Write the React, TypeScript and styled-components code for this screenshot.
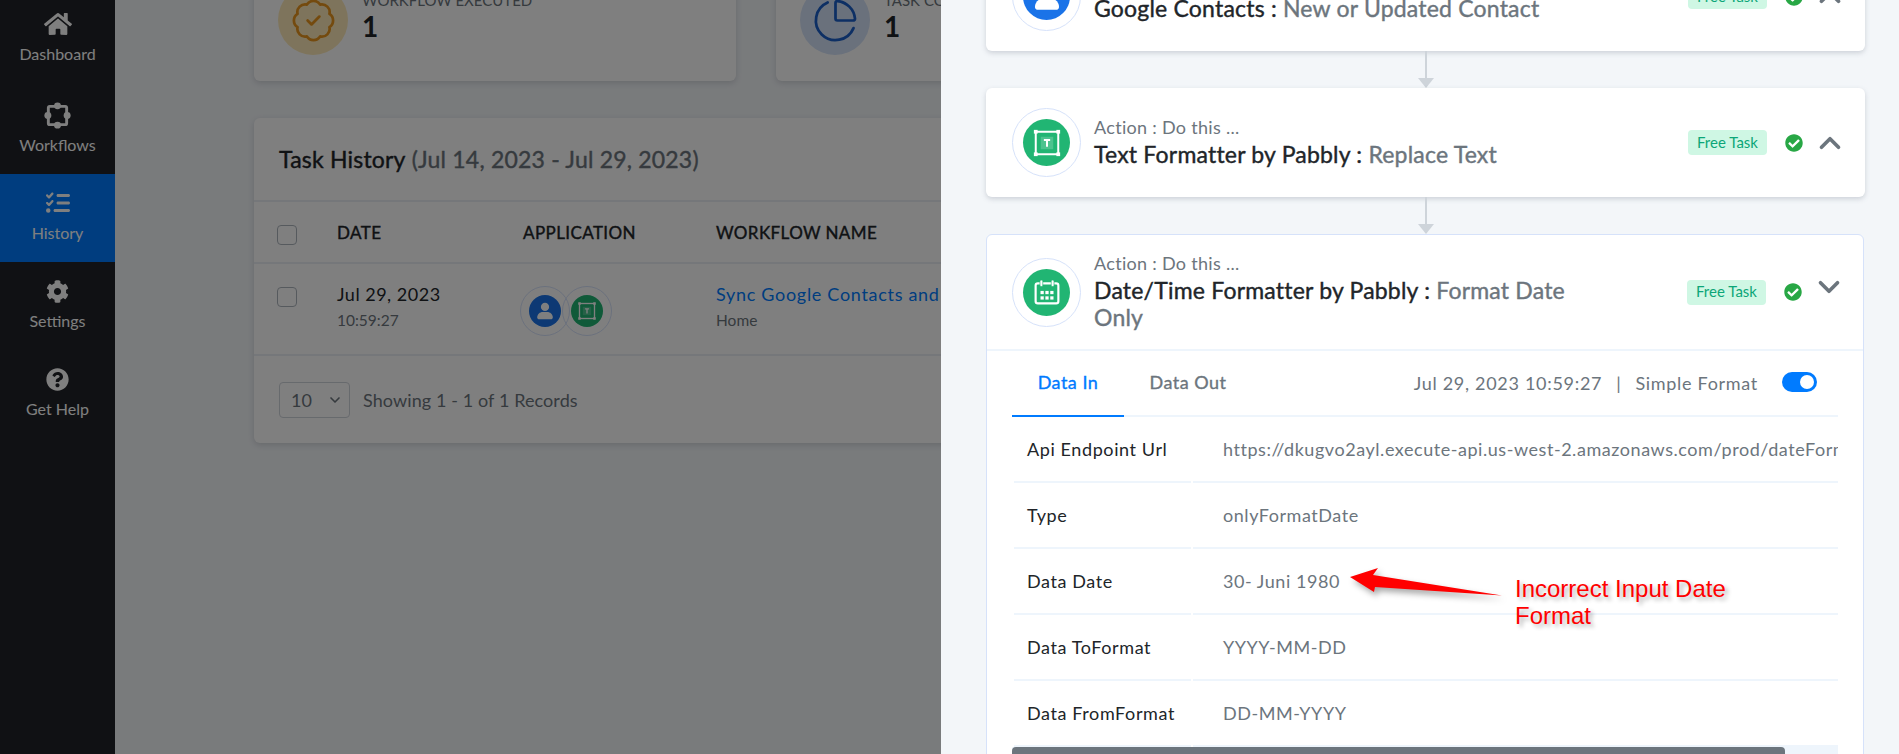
import React from 'react';
import styled, { createGlobalStyle } from 'styled-components';
import { FaHome, FaCog, FaQuestionCircle, FaCheckCircle } from 'react-icons/fa';
import { FaListCheck } from 'react-icons/fa6';
import { BadgeCheck, PieChart, ChevronDown, ChevronUp } from 'lucide-react';

const GlobalStyle = createGlobalStyle`
  html, body { margin: 0; padding: 0; height: 100%; background: #f3f6f9; }
  body { font-family: Lato, "Noto Sans", sans-serif; color: #212529; }
  * { box-sizing: border-box; }
`;

const Root = styled.div`
  position: relative;
  display: flex;
  width: 1899px;
  height: 754px;
  overflow: hidden;
`;

/* left app */
const Sidebar = styled.nav`
  width: 115px;
  flex: none;
  background: #212328;
  display: flex;
  flex-direction: column;
  margin-top: -2px;
`;

const NavItem = styled.div<{ $active?: boolean }>`
  height: 88px;
  display: flex;
  flex-direction: column;
  align-items: center;
  padding-top: 15px;
  gap: 6px;
  color: #fff;
  font-size: 16px;
  background: ${(p) => (p.$active ? '#007bff' : 'transparent')};
  &:first-child { padding-top: 12px; }
`;

const NavIcon = styled.span`
  height: 28px;
  display: flex;
  align-items: center;
  justify-content: center;
`;

const Main = styled.main`
  flex: 1;
  padding: 0 0 0 139px;
  margin-top: -38px;
  display: flex;
  flex-direction: column;
  gap: 37px;
`;

const Stats = styled.div`
  display: flex;
  gap: 40px;
`;

const StatCard = styled.div`
  width: 482px;
  height: 119px;
  flex: none;
  background: #fff;
  border-radius: 6px;
  box-shadow: 0 2px 6px rgba(60, 70, 90, 0.2);
  display: flex;
  align-items: center;
  gap: 14px;
  padding: 0 24px 3px;
`;

const StatIcon = styled.div<{ $bg: string; $fg: string }>`
  width: 70px;
  height: 70px;
  border-radius: 50%;
  background: ${(p) => p.$bg};
  color: ${(p) => p.$fg};
  display: flex;
  align-items: center;
  justify-content: center;
`;

const StatBody = styled.div`
  margin-bottom: 7px;
`;

const StatLabel = styled.div`
  font-size: 15px;
  line-height: 19px;
  color: #6c757d;
`;

const StatValue = styled.div`
  font-size: 28px;
  font-weight: 700;
  line-height: 32px;
`;

const HistoryCard = styled.section`
  width: 1100px;
  height: 325px;
  background: #fff;
  border-radius: 6px;
  box-shadow: 0 2px 6px rgba(60, 70, 90, 0.2);
`;

const HistoryTitle = styled.h2`
  margin: 0;
  height: 84px;
  padding: 0 25px;
  display: flex;
  align-items: center;
  gap: 6px;
  font-size: 23px;
  font-weight: 400;
  letter-spacing: 0.2px;
  -webkit-text-stroke: 0.4px currentColor;
  border-bottom: 2px solid #eaeff5;
  span { color: #6c757d; }
`;

const HistoryRow = styled.div<{ $head?: boolean }>`
  display: grid;
  grid-template-columns: 60px 186px 193px 1fr;
  height: ${(p) => (p.$head ? '62px' : '92px')};
  padding-left: 23px;
  border-bottom: 2px solid #eaeff5;
  align-items: ${(p) => (p.$head ? 'center' : 'start')};
  padding-top: ${(p) => (p.$head ? '0' : '18px')};
`;

const HeadCell = styled.div`
  font-size: 17px;
  letter-spacing: 0.4px;
  -webkit-text-stroke: 0.4px currentColor;
  color: #212529;
`;

const Checkbox = styled.span`
  display: block;
  width: 20px;
  height: 20px;
  margin-top: 5px;
  border: 1px solid #adb5bd;
  border-radius: 4px;
  background: #fff;
`;

const CellMain = styled.div<{ $link?: boolean }>`
  font-size: 18px;
  line-height: 24px;
  letter-spacing: ${(p) => (p.$link ? '0.7px' : '0.5px')};
  white-space: nowrap;
  color: ${(p) => (p.$link ? '#007bff' : '#212529')};
`;

const CellSub = styled.div`
  font-size: 15.5px;
  line-height: 24px;
  margin-top: 2px;
  color: #6c757d;
`;

const AppIcons = styled.div`
  display: flex;
  margin-left: -3px;
  margin-top: 4px;
`;

const RingSmall = styled.div`
  width: 50px;
  height: 50px;
  border: 1px solid #d6e2fa;
  border-radius: 50%;
  display: flex;
  align-items: center;
  justify-content: center;
  flex: none;
  & + & { margin-left: -8px; }
`;

const AppDot = styled.div<{ $bg: string; $size: number }>`
  width: ${(p) => p.$size}px;
  height: ${(p) => p.$size}px;
  border-radius: 50%;
  background: ${(p) => p.$bg};
  display: flex;
  align-items: center;
  justify-content: center;
  flex: none;
`;

const Pager = styled.div`
  display: flex;
  align-items: center;
  gap: 13px;
  padding: 26px 25px;
  font-size: 18px;
  letter-spacing: 0.1px;
  color: #6c757d;
`;

const PageSelect = styled.div`
  width: 71px;
  height: 36px;
  border: 1px solid #ced4da;
  border-radius: 4px;
  display: flex;
  align-items: center;
  justify-content: space-between;
  padding: 0 6px 0 11px;
`;

const Overlay = styled.div`
  position: absolute;
  inset: 0;
  background: rgba(0, 0, 0, 0.5);
`;

/* right drawer */
const Drawer = styled.aside`
  position: absolute;
  top: 0;
  right: 0;
  bottom: 0;
  width: 958px;
  background: #f3f6f9;
  overflow: hidden;
  padding: 0 34px 0 45px;
`;

const Flow = styled.div`
  margin-top: -58px;
  display: flex;
  flex-direction: column;
`;

const StepCard = styled.div<{ $open?: boolean }>`
  background: #fff;
  border-radius: 6px;
  box-shadow: ${(p) => (p.$open ? 'none' : '0 2px 5px rgba(90, 100, 120, 0.25)')};
  border: ${(p) => (p.$open ? '1px solid #d6e2fa' : 'none')};
  margin-right: ${(p) => (p.$open ? '1px' : '0')};
`;

const StepHead = styled.div<{ $open?: boolean }>`
  display: flex;
  align-items: center;
  height: ${(p) => (p.$open ? '114px' : '109px')};
  padding: 0 ${(p) => (p.$open ? '17px' : '18px')} 0 ${(p) => (p.$open ? '25px' : '26px')};
`;

const Ring = styled.div`
  width: 69px;
  height: 69px;
  border: 1px solid #d6e2fa;
  border-radius: 50%;
  display: flex;
  align-items: center;
  justify-content: center;
  flex: none;
  margin-right: 13px;
`;

const StepText = styled.div`
  width: 480px;
  margin-bottom: 2px;
`;

const StepKind = styled.div`
  font-size: 18px;
  line-height: 24px;
  letter-spacing: 0.3px;
  margin-bottom: 2px;
  color: #6c757d;
`;

const StepTitle = styled.div`
  font-size: 23px;
  line-height: 27px;
  letter-spacing: 0.2px;
  -webkit-text-stroke: 0.4px currentColor;
  color: #212529;
  span { color: #6c757d; }
`;

const StepMeta = styled.div`
  margin-left: auto;
  display: flex;
  align-items: center;
  color: #28a745;
`;

const FreeTask = styled.span`
  width: 79px;
  height: 25px;
  padding-bottom: 2px;
  border-radius: 4px;
  background: #cff7e4;
  color: #0ca678;
  font-size: 15px;
  display: flex;
  align-items: center;
  justify-content: center;
  margin-right: 18px;
`;

const Chevron = styled.span<{ $down?: boolean }>`
  display: flex;
  color: #6c757d;
  margin-left: 10px;
  margin-top: ${(p) => (p.$down ? '-10px' : '0')};
`;

const Connector = styled.div`
  height: 37px;
  width: 17px;
  margin-left: 431px;
  display: flex;
  flex-direction: column;
  align-items: center;
  &::before {
    content: '';
    width: 2px;
    flex: 1;
    background: #ced4da;
  }
  &::after {
    content: '';
    width: 0;
    height: 0;
    border-left: 8.5px solid transparent;
    border-right: 8.5px solid transparent;
    border-top: 10px solid #ced4da;
  }
`;

const TabBar = styled.div`
  border-top: 2px solid #eef5fc;
`;

const Tabs = styled.div`
  display: flex;
  align-items: stretch;
  height: 66px;
  margin: 0 25px;
  border-bottom: 2px solid #eef5fc;
`;

const Tab = styled.div<{ $active?: boolean }>`
  width: ${(p) => (p.$active ? '112px' : '128px')};
  display: flex;
  align-items: center;
  justify-content: center;
  padding-bottom: 2px;
  font-size: 18px;
  letter-spacing: 0.5px;
  -webkit-text-stroke: 0.35px currentColor;
  color: ${(p) => (p.$active ? '#007bff' : '#6c757d')};
  border-bottom: 2px solid ${(p) => (p.$active ? '#007bff' : 'transparent')};
  margin-bottom: -2px;
`;

const TabInfo = styled.div`
  margin-left: auto;
  display: flex;
  align-items: center;
  font-size: 18px;
  letter-spacing: 0.7px;
  color: #6c757d;
  padding-right: 21px;
  gap: 14px;
`;

const Toggle = styled.span`
  position: relative;
  display: block;
  width: 35px;
  height: 20px;
  border-radius: 10px;
  background: #007bff;
  margin-left: 10px;
  margin-bottom: 2px;
  &::after {
    content: '';
    position: absolute;
    top: 3px;
    right: 3px;
    width: 14px;
    height: 14px;
    border-radius: 50%;
    background: #fff;
  }
`;

const DataTable = styled.div`
  margin: 0 25px;
  overflow: hidden;
`;

const DataRow = styled.div`
  display: grid;
  grid-template-columns: 177px 1fr;
  height: 66px;
  padding-left: 2px;
  column-gap: 2px;
`;

const DataLabel = styled.div`
  display: flex;
  align-items: center;
  padding-left: 13px;
  font-size: 18px;
  letter-spacing: 0.6px;
  color: #212529;
  white-space: nowrap;
  border-bottom: 2px solid #eef5fc;
`;

const DataValue = styled.div`
  display: flex;
  align-items: center;
  padding-left: 30px;
  font-size: 18px;
  letter-spacing: 0.55px;
  color: #6c757d;
  white-space: nowrap;
  overflow: hidden;
  border-bottom: 2px solid #eef5fc;
`;

const ScrollTrack = styled.div`
  height: 20px;
  background: #eef5fc;
`;

const ScrollThumb = styled.div`
  width: 773px;
  height: 100%;
  background: #6c757d;
  border-radius: 4px;
`;

const ArrowMark = styled.svg`
  position: absolute;
  left: 400px;
  top: 560px;
  overflow: visible;
  filter: drop-shadow(3px 4px 3px rgba(0, 0, 0, 0.35));
`;

const Note = styled.div`
  position: absolute;
  left: 574px;
  top: 575px;
  width: 240px;
  font-family: "Liberation Sans", Arial, sans-serif;
  font-size: 24px;
  line-height: 27px;
  color: #f00;
  text-shadow: 3px 3px 4px rgba(0, 0, 0, 0.3);
`;

const WorkflowIcon = () => (
  <svg width="27" height="27" viewBox="0 0 28 28" fill="none">
    <rect x="4.5" y="4.5" width="19" height="19" rx="1.5" stroke="currentColor" strokeWidth="3" />
    <circle cx="14" cy="4" r="3.6" fill="currentColor" />
    <circle cx="14" cy="24" r="3.6" fill="currentColor" />
    <circle cx="4" cy="14" r="3.6" fill="currentColor" />
    <circle cx="24" cy="14" r="3.6" fill="currentColor" />
  </svg>
);

const UserGlyph = ({ size }: { size: number }) => (
  <svg width={size} height={size} viewBox="0 0 24 24" fill="#fff">
    <circle cx="12" cy="7.5" r="4.5" />
    <path d="M3.5 19c0-3.6 3-6 6-6h5c3 0 6 2.4 6 6 0 1.2-1 2-2 2H5.5c-1 0-2-.8-2-2z" />
  </svg>
);

const TextGlyph = ({ size }: { size: number }) => (
  <svg width={size} height={size} viewBox="0 0 24 24" fill="none" stroke="#fff">
    <rect x="3" y="3" width="18" height="18" strokeWidth="1.6" />
    <rect x="7" y="7" width="10" height="10" fill="rgba(255,255,255,0.2)" strokeWidth="0" />
    <rect x="1.5" y="1.5" width="3" height="3" fill="#fff" strokeWidth="0" />
    <rect x="19.5" y="1.5" width="3" height="3" fill="#fff" strokeWidth="0" />
    <rect x="1.5" y="19.5" width="3" height="3" fill="#fff" strokeWidth="0" />
    <rect x="19.5" y="19.5" width="3" height="3" fill="#fff" strokeWidth="0" />
    <path d="M9.5 9.5h5M12 9.5v5.5" strokeWidth="1.6" />
  </svg>
);

const CalendarGlyph = ({ size }: { size: number }) => (
  <svg width={size} height={size} viewBox="0 0 24 24" fill="none">
    <rect x="1.5" y="4" width="21" height="18.5" rx="2" stroke="#fff" strokeWidth="2" />
    <rect x="5.5" y="1" width="2.6" height="6" rx="1.3" fill="#fff" stroke="#21b573" strokeWidth="0.6" />
    <rect x="15.9" y="1" width="2.6" height="6" rx="1.3" fill="#fff" stroke="#21b573" strokeWidth="0.6" />
    <g fill="#fff">
      {[11, 16].map((y) =>
        [6, 10.5, 15].map((x) => <rect key={`${x}-${y}`} x={x} y={y} width="3" height="3" />)
      )}
    </g>
  </svg>
);

const steps = [
  { kind: 'Trigger : When this happens ...', app: 'Google Contacts :', event: 'New or Updated Contact', color: '#1a73e8', glyph: <UserGlyph size={34} /> },
  { kind: 'Action : Do this ...', app: 'Text Formatter by Pabbly :', event: 'Replace Text', color: '#21b573', glyph: <TextGlyph size={30} /> },
];

const rows = [
  ['Api Endpoint Url', 'https://dkugvo2ayl.execute-api.us-west-2.amazonaws.com/prod/dateFormatter'],
  ['Type', 'onlyFormatDate'],
  ['Data Date', '30- Juni 1980'],
  ['Data ToFormat', 'YYYY-MM-DD'],
  ['Data FromFormat', 'DD-MM-YYYY'],
];

const App = () => (
  <Root>
    <GlobalStyle />
    <Sidebar>
      <NavItem><NavIcon><FaHome size={28} /></NavIcon>Dashboard</NavItem>
      <NavItem><NavIcon><WorkflowIcon /></NavIcon>Workflows</NavItem>
      <NavItem $active><NavIcon><FaListCheck size={24} /></NavIcon>History</NavItem>
      <NavItem><NavIcon><FaCog size={23} /></NavIcon>Settings</NavItem>
      <NavItem><NavIcon><FaQuestionCircle size={23} /></NavIcon>Get Help</NavItem>
    </Sidebar>
    <Main>
      <Stats>
        <StatCard>
          <StatIcon $bg="#fde9b8" $fg="#e8951c"><BadgeCheck size={47} strokeWidth={1.4} /></StatIcon>
          <StatBody>
            <StatLabel>WORKFLOW EXECUTED</StatLabel>
            <StatValue>1</StatValue>
          </StatBody>
        </StatCard>
        <StatCard>
          <StatIcon $bg="#d4e2f8" $fg="#1a5fc8"><PieChart size={47} strokeWidth={1.4} /></StatIcon>
          <StatBody>
            <StatLabel>TASK CONSUMED</StatLabel>
            <StatValue>1</StatValue>
          </StatBody>
        </StatCard>
      </Stats>
      <HistoryCard>
        <HistoryTitle>Task History <span>(Jul 14, 2023 - Jul 29, 2023)</span></HistoryTitle>
        <HistoryRow $head>
          <Checkbox />
          <HeadCell>DATE</HeadCell>
          <HeadCell>APPLICATION</HeadCell>
          <HeadCell>WORKFLOW NAME</HeadCell>
        </HistoryRow>
        <HistoryRow>
          <Checkbox />
          <div>
            <CellMain>Jul 29, 2023</CellMain>
            <CellSub>10:59:27</CellSub>
          </div>
          <AppIcons>
            <RingSmall><AppDot $bg="#1a73e8" $size={32}><UserGlyph size={22} /></AppDot></RingSmall>
            <RingSmall><AppDot $bg="#21b573" $size={32}><TextGlyph size={20} /></AppDot></RingSmall>
          </AppIcons>
          <div>
            <CellMain $link>Sync Google Contacts and Home Sheet</CellMain>
            <CellSub>Home</CellSub>
          </div>
        </HistoryRow>
        <Pager>
          <PageSelect>10 <ChevronDown size={16} strokeWidth={2.5} /></PageSelect>
          Showing 1 - 1 of 1 Records
        </Pager>
      </HistoryCard>
    </Main>
    <Overlay />
    <Drawer>
      <Flow>
        {steps.map((s) => (
          <React.Fragment key={s.app}>
            <StepCard>
              <StepHead>
                <Ring><AppDot $bg={s.color} $size={47}>{s.glyph}</AppDot></Ring>
                <StepText>
                  <StepKind>{s.kind}</StepKind>
                  <StepTitle>{s.app} <span>{s.event}</span></StepTitle>
                </StepText>
                <StepMeta>
                  <FreeTask>Free Task</FreeTask>
                  <FaCheckCircle size={18} />
                  <Chevron><ChevronUp size={34} strokeWidth={2.6} /></Chevron>
                </StepMeta>
              </StepHead>
            </StepCard>
            <Connector />
          </React.Fragment>
        ))}
        <StepCard $open>
          <StepHead $open>
            <Ring><AppDot $bg="#21b573" $size={47}><CalendarGlyph size={26} /></AppDot></Ring>
            <StepText>
              <StepKind>Action : Do this ...</StepKind>
              <StepTitle>Date/Time Formatter by Pabbly : <span>Format Date Only</span></StepTitle>
            </StepText>
            <StepMeta>
              <FreeTask>Free Task</FreeTask>
              <FaCheckCircle size={18} />
              <Chevron $down><ChevronDown size={34} strokeWidth={2.6} /></Chevron>
            </StepMeta>
          </StepHead>
          <TabBar>
            <Tabs>
              <Tab $active>Data In</Tab>
              <Tab>Data Out</Tab>
              <TabInfo>
                Jul 29, 2023 10:59:27 <span>|</span> Simple Format
                <Toggle />
              </TabInfo>
            </Tabs>
          </TabBar>
          <DataTable>
            {rows.map(([label, value]) => (
              <DataRow key={label}>
                <DataLabel>{label}</DataLabel>
                <DataValue>{value}</DataValue>
              </DataRow>
            ))}
            <ScrollTrack><ScrollThumb /></ScrollTrack>
          </DataTable>
        </StepCard>
      </Flow>
      <ArrowMark width="160" height="40" viewBox="0 0 160 40">
        <polygon points="9,17 37,8 32,15 161,35.5 34,27 33,32" fill="#f00" />
      </ArrowMark>
      <Note>Incorrect Input Date<br />Format</Note>
    </Drawer>
  </Root>
);

export default App;
